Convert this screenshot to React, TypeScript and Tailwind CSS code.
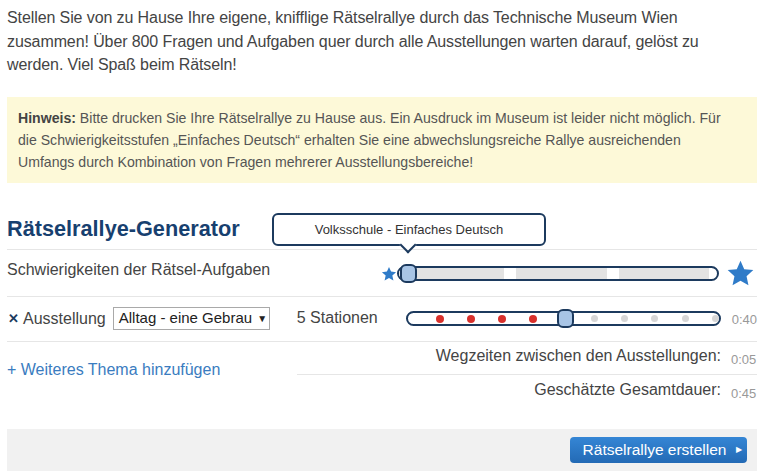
import React from "react";

function Star({ className }: { className: string }) {
  return (
    <svg viewBox="0 0 24 24" className={className} aria-hidden="true">
      <polygon
        points="12,1.5 15.1,8.4 22.6,9.2 17,14.3 18.6,21.7 12,17.9 5.4,21.7 7,14.3 1.4,9.2 8.9,8.4"
        fill="#2f7bc8"
      />
    </svg>
  );
}

const stations = [1, 2, 3, 4, 5, 6, 7, 8, 9, 10];
const selected = 5;

export default function App() {
  return (
    <div className="bg-white min-h-[475px] font-['Liberation_Sans',Arial,sans-serif] text-[#444]">
      <div className="w-[750px] ml-[7px] pt-[6px]">
        <p className="text-[16px] leading-[23.5px] tracking-[-0.1px]">
          Stellen Sie von zu Hause Ihre eigene, knifflige Rätselrallye durch das Technische Museum Wien
          zusammen! Über 800 Fragen und Aufgaben quer durch alle Ausstellungen warten darauf, gelöst zu
          werden. Viel Spaß beim Rätseln!
        </p>

        {/* Hinweis */}
        <div className="mt-[20px] bg-[#fdf9d8] pl-[11px] pt-[10px] pb-[10px] text-[14.1px] leading-[22px] text-[#555] whitespace-nowrap">
          <b className="text-[#444]">Hinweis:</b> Bitte drucken Sie Ihre Rätselrallye zu Hause aus. Ein
          Ausdruck im Museum ist leider nicht möglich. Für
          <br />
          die Schwierigkeitsstufen „Einfaches Deutsch“ erhalten Sie eine abwechslungsreiche Rallye
          ausreichenden
          <br />
          Umfangs durch Kombination von Fragen mehrerer Ausstellungsbereiche!
        </div>

        <h2 className="mt-[32px] pb-[6px] text-[21.7px] leading-[28px] font-bold text-[#17406f] border-b border-[#e6e6e6]">
          Rätselrallye-Generator
        </h2>

        {/* Schwierigkeit */}
        <div className="flex items-center h-[47px] border-b border-[#e6e6e6]">
          <span className="text-[16px] pb-[6px]">Schwierigkeiten der Rätsel-Aufgaben</span>
          <div className="ml-auto mr-[2px] flex items-center pt-[2px]">
            <Star className="w-[16px] h-[16px]" />
            <div className="relative">
              <div className="w-[322px] h-[15px] rounded-full border-2 border-[#1c3a5e] bg-white overflow-hidden flex">
                <div className="w-[105px] bg-[#e3e3e3]" />
                <div className="w-[12px]" />
                <div className="w-[91px] bg-[#e3e3e3]" />
                <div className="w-[12px]" />
                <div className="w-[90px] bg-[#e3e3e3]" />
              </div>
              <div className="absolute left-[3px] top-[-2px] w-[17px] h-[19px] rounded-[6px] border-2 border-[#1c3a5e] bg-[#a8c5e6]" />
              <div className="absolute left-[-125px] top-[-53px] w-[274px] h-[33px] rounded-[6px] border-2 border-[#1c3a5e] bg-white flex items-center justify-center text-[13px] text-[#333]">
                Volksschule - Einfaches Deutsch
                <div className="absolute left-[128px] bottom-[-7px] w-[12px] h-[12px] rotate-45 bg-white border-r-2 border-b-2 border-[#1c3a5e]" />
              </div>
            </div>
            <Star className="ml-[7px] w-[29px] h-[29px]" />
          </div>
        </div>

        {/* Ausstellung */}
        <div className="flex items-center h-[45px] border-b border-[#e6e6e6]">
          <div className="w-[290px] flex items-center">
            <span className="text-[#1c3a5e] text-[13px] font-bold leading-none pl-[1px]">✕</span>
            <span className="ml-[4px] text-[16px]">Ausstellung</span>
            <div className="ml-[7px] w-[157px] h-[23px] border border-[#a9a9a9] flex items-center px-[5px] text-[15px] text-[#222] whitespace-nowrap overflow-hidden">
              Alltag - eine Gebrau
              <span className="ml-[5px] text-[10px]">▼</span>
            </div>
          </div>
          <span className="w-[109px] text-[16px] pb-[2px]">5 Stationen</span>
          <div className="relative">
            <div className="relative w-[315px] h-[15px] rounded-full border-2 border-[#1c3a5e] bg-white overflow-hidden">
              <div className="absolute inset-y-0 left-[-3px] right-0 flex items-center justify-between">
                <span className="w-[8px] h-[8px]" />
                {stations.map((s) => (
                  <span
                    key={s}
                    className={
                      s < selected
                        ? "w-[8px] h-[8px] rounded-full bg-[#d8302b]"
                        : s === selected
                        ? "w-[8px] h-[8px]"
                        : "w-[7px] h-[7px] rounded-full bg-[#d6d6d6]"
                    }
                  />
                ))}
              </div>
            </div>
            <div className="absolute left-[151px] top-[-2px] w-[17px] h-[19px] rounded-[6px] border-2 border-[#1c3a5e] bg-[#a8c5e6]" />
          </div>
          <span className="ml-[11px] text-[13px] text-[#999] pt-[3px]">0:40</span>
        </div>

        {/* Zeiten */}
        <div className="flex">
          <div className="w-[290px] flex items-center pb-[3px]">
            <span className="text-[16px] text-[#3a7cc0]">+ Weiteres Thema hinzufügen</span>
          </div>
          <div className="flex-1">
            <div className="flex items-end h-[33px] border-b border-[#e6e6e6] pb-[6px]">
              <span className="flex-1 text-right pr-[10px] text-[16px]">Wegzeiten zwischen den Ausstellungen:</span>
              <span className="w-[26px] text-[13px] text-[#999] leading-[16px]">0:05</span>
            </div>
            <div className="flex items-end h-[27px]">
              <span className="flex-1 text-right pr-[10px] text-[16px]">Geschätzte Gesamtdauer:</span>
              <span className="w-[26px] text-[13px] text-[#999] leading-[16px]">0:45</span>
            </div>
          </div>
        </div>

        {/* Aktion */}
        <div className="mt-[27px] h-[42px] bg-[#f1f1f1] flex items-center justify-end pr-[10px]">
          <button className="w-[177px] h-[26px] rounded-[4px] bg-gradient-to-b from-[#3586d5] to-[#236ab5] text-white text-[15.5px] flex items-center justify-center gap-[10px] pl-[8px]">
            Rätselrallye erstellen
            <span className="text-[8px]">▶</span>
          </button>
        </div>
      </div>
    </div>
  );
}
